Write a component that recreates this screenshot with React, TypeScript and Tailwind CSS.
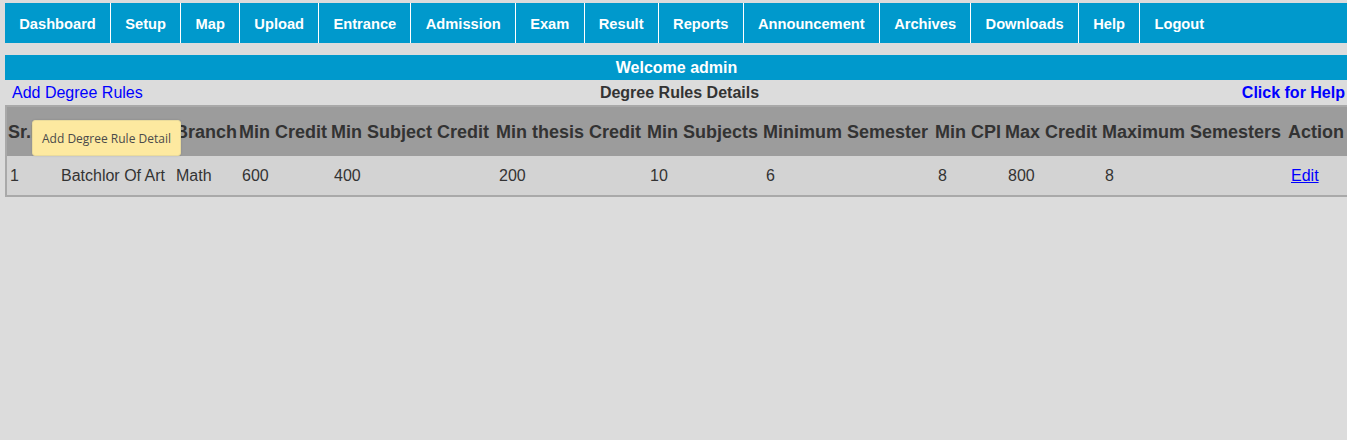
import React from 'react';

const navItems = [
  'Dashboard',
  'Setup',
  'Map',
  'Upload',
  'Entrance',
  'Admission',
  'Exam',
  'Result',
  'Reports',
  'Announcement',
  'Archives',
  'Downloads',
  'Help',
  'Logout',
];

const columns = [
  { label: 'Sr.No', width: 'w-[49px]' },
  { label: 'Degree Name', width: 'w-[117px]' },
  { label: 'Branch', width: 'w-[64px]' },
  { label: 'Min Credit', width: 'w-[92px]' },
  { label: 'Min Subject Credit', width: 'w-[165px]' },
  { label: 'Min thesis Credit', width: 'w-[151px]' },
  { label: 'Min Subjects', width: 'w-[116px]' },
  { label: 'Minimum Semester', width: 'w-[172px]' },
  { label: 'Min CPI', width: 'w-[70px]' },
  { label: 'Max Credit', width: 'w-[97px]' },
  { label: 'Maximum Semesters', width: 'w-[186px]' },
  { label: 'Action', width: 'w-[62px]' },
];

const rows = [
  {
    sr: '1',
    degree: 'Batchlor Of Art',
    branch: 'Math',
    minCredit: '600',
    minSubjectCredit: '400',
    minThesisCredit: '200',
    minSubjects: '10',
    minSemester: '6',
    minCpi: '8',
    maxCredit: '800',
    maxSemesters: '8',
  },
];

export default function App() {
  return (
    <div className="w-[1347px] h-[440px] overflow-hidden bg-[#dcdcdc] font-['Liberation_Sans',Arial,sans-serif]">
      <div className="w-[1343px] ml-[5px] pt-[3px]">
        {/* Top menu */}
        <nav className="flex h-[40px] bg-[#0099cc]">
          {navItems.map((item, i) => (
            <a
              key={item}
              href="#"
              className={`flex h-full items-center px-[14.25px] pt-[2px] text-[14.67px] font-bold text-white ${
                i < navItems.length - 1 ? 'border-r border-white' : ''
              }`}
            >
              {item}
            </a>
          ))}
        </nav>

        {/* Welcome bar */}
        <div className="mt-[12px] flex h-[25px] items-center justify-center bg-[#0099cc] text-[16px] font-bold text-white">
          Welcome admin
        </div>

        {/* Title row */}
        <div className="grid h-[25px] grid-cols-3 items-center text-[16px]">
          <a href="#" className="pl-[7px] text-[#0000ff]">
            Add Degree Rules
          </a>
          <div className="pl-[6px] text-center font-bold text-[#333333]">Degree Rules Details</div>
          <a href="#" className="pr-[3px] text-right font-bold text-[#0000ff]">
            Click for Help
          </a>
        </div>

        {/* Rules table */}
        <div className="relative">
          <table className="w-[1345px] table-fixed border-separate border-spacing-0 border-2 border-[#a9a9a9] text-[#333333]">
            <colgroup>
              {columns.map((c) => (
                <col key={c.label} className={c.width} />
              ))}
            </colgroup>
            <thead>
              <tr className="bg-[#9c9c9c]">
                {columns.map((c, i) => (
                  <th
                    key={c.label}
                    className={`h-[49px] overflow-hidden whitespace-nowrap p-0 pt-[2px] text-left text-[18px] font-bold ${
                      i === 0 ? 'pl-[1px]' : 'pl-[2px]'
                    }`}
                  >
                    {c.label}
                  </th>
                ))}
              </tr>
            </thead>
            <tbody>
              {rows.map((r) => (
                <tr key={r.sr} className="bg-[#d3d3d3] text-[16px]">
                  <td className="h-[39px] p-0 pl-[3px] whitespace-nowrap">{r.sr}</td>
                  <td className="p-0 pl-[5px] whitespace-nowrap">{r.degree}</td>
                  <td className="p-0 pl-[3px] whitespace-nowrap">{r.branch}</td>
                  <td className="p-0 pl-[5px]">{r.minCredit}</td>
                  <td className="p-0 pl-[5px]">{r.minSubjectCredit}</td>
                  <td className="p-0 pl-[5px]">{r.minThesisCredit}</td>
                  <td className="p-0 pl-[5px]">{r.minSubjects}</td>
                  <td className="p-0 pl-[5px]">{r.minSemester}</td>
                  <td className="p-0 pl-[5px]">{r.minCpi}</td>
                  <td className="p-0 pl-[5px]">{r.maxCredit}</td>
                  <td className="p-0 pl-[5px]">{r.maxSemesters}</td>
                  <td className="p-0 pl-[5px]">
                    <a href="#" className="text-[#0000ff] underline">
                      Edit
                    </a>
                  </td>
                </tr>
              ))}
            </tbody>
          </table>

          {/* Tooltip over the header */}
          <div className="absolute left-[27px] top-[15px] flex h-[36px] w-[149px] items-center rounded-[3px] border border-[#eadb9c] bg-[#fde9a0] px-[9px] pt-[2px] font-['Open_Sans',sans-serif] text-[12px] text-[#4a4a4a] shadow-[0_0_2px_rgba(0,0,0,0.15)]">
            Add Degree Rule Detail
          </div>
        </div>
      </div>
    </div>
  );
}
